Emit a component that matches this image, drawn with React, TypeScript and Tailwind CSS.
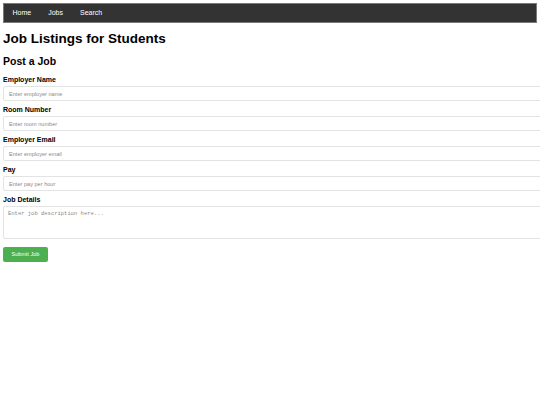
import React from "react";

const fields = [
  { label: "Employer Name", ph: "Enter employer name" },
  { label: "Room Number", ph: "Enter room number" },
  { label: "Employer Email", ph: "Enter employer email" },
  { label: "Pay", ph: "Enter pay per hour" },
];

export default function App() {
  return (
    <div className="w-[540px] h-[405px] overflow-hidden bg-white text-black" style={{ fontFamily: '"Liberation Sans", Arial, sans-serif' }}>
      <div className="pt-[3px] px-[3px]">
        <nav className="h-[20px] bg-[#333333] border border-[#7a7a7a] flex items-center">
          {["Home", "Jobs", "Search"].map((t) => (
            <span key={t} className="px-[8.5px] text-[7px] leading-[10px] text-white">{t}</span>
          ))}
        </nav>
        <h1 className="mt-[7px] text-[13.5px] leading-[18px] font-bold">Job Listings for Students</h1>
        <h2 className="mt-[6px] text-[10.5px] leading-[14px] font-bold">Post a Job</h2>
        <div className="mt-[7px] flex flex-col">
          {fields.map((f) => (
            <div key={f.label} className="flex flex-col mb-[4px]">
              <label className="text-[7px] leading-[10px] font-bold">{f.label}</label>
              <input
                className="mt-[1px] h-[15px] w-[560px] border border-[#e3e3e3] rounded-[2px] px-[5px] text-[5.6px] placeholder:text-[#8a8a8a] outline-none"
                placeholder={f.ph}
              />
            </div>
          ))}
          <label className="text-[7px] leading-[10px] font-bold">Job Details</label>
          <textarea
            className="mt-[1px] h-[33px] w-[560px] border border-[#e3e3e3] rounded-[2px] px-[4px] py-[3px] text-[5.5px] leading-[8px] resize-none placeholder:text-[#8a8a8a] outline-none"
            style={{ fontFamily: '"Liberation Mono", monospace' }}
            placeholder="Enter job description here..."
          />
          <div className="mt-[8px]">
            <button className="h-[15px] w-[45px] bg-[#4caf50] text-white text-[5.6px] rounded-[2px] flex items-center justify-center">
              Submit Job
            </button>
          </div>
        </div>
      </div>
    </div>
  );
}
